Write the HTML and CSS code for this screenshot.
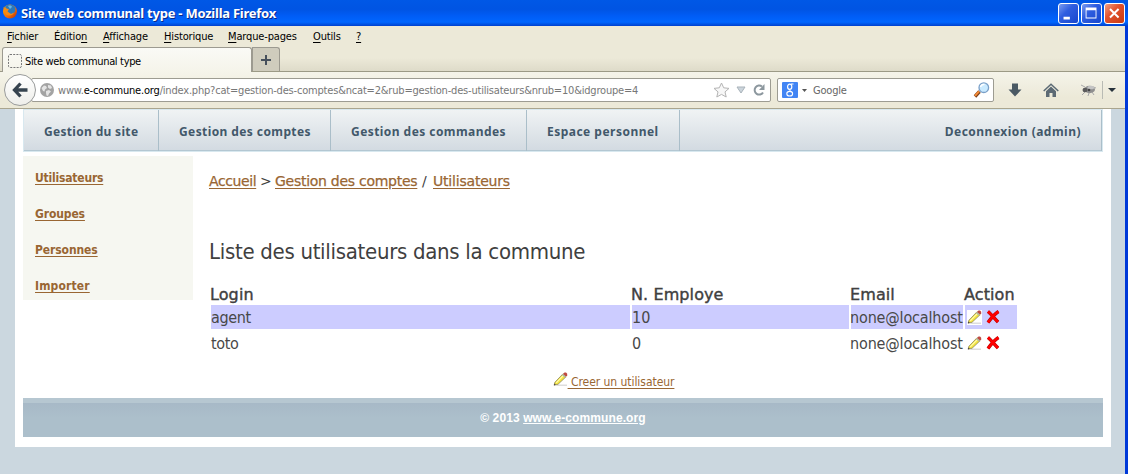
FILE: index.html
```html
<!DOCTYPE html>
<html lang="fr">
<head>
<meta charset="utf-8">
<title>Site web communal type</title>
<link rel="stylesheet" href="styles.css">
</head>
<body>
<svg class="defs" width="0" height="0">
  <defs>
    <linearGradient id="fox" x1="0" y1="0" x2="1" y2="1"><stop offset="0" stop-color="#ffb400"/><stop offset=".6" stop-color="#f06a0a"/><stop offset="1" stop-color="#b02c08"/></linearGradient>
    <symbol id="pencil" viewBox="0 0 15 15">
      <path d="M4 12.500h10v1.500H3z" fill="#ddd"/>
      <path d="M1.200 13L2 10.200 10 1.800 13.200 4.600 5 12.300z" fill="#f4e53c" stroke="#8b8558" stroke-width=".8"/>
      <path d="M3.200 10.800L11 2.800" stroke="#fffbb0" stroke-width="1.200"/>
      <path d="M10 2l1.500-1.600h1.500l1.200 1.300v1.600L13 4.600z" fill="#c04a42"/>
      <path d="M9.300 2.500l3 2.600" stroke="#aeb6b0" stroke-width="1.300"/>
      <path d="M.8 13.600l.6-2 1.500 1.500z" fill="#4c4538"/>
    </symbol>
    <symbol id="cross" viewBox="0 0 14 14">
      <path d="M2 1.500C5 4 9 9 12 12M12.500 1.500C8.500 4 4.500 9 2 12.500" stroke="#b30000" stroke-width="3.400" fill="none"/>
      <path d="M2 1.500C5 4 9 9 12 12M12.500 1.500C8.500 4 4.500 9 2 12.500" stroke="#f00" stroke-width="2.400" fill="none"/>
    </symbol>
  </defs>
</svg>
<div class="window">
  <header class="titlebar">
    <svg class="fox" width="16" height="16" viewBox="0 0 16 16"><circle cx="8" cy="7.500" r="7" fill="url(#fox)"/><path d="M3 3C5 0 11 0 13 3c1 3 0 6-3 7-3 0-5-1-6-3l2-1z" fill="#2b79bd"/><path d="M6 2c2-1 4 0 4 1L8 5z" fill="#65b6e6"/><path d="M1.200 3l2 1.500L7 5 5.500 7.500 9 10l3-1.500c-1 3-5 4-8 2z" fill="#f58a16"/></svg>
    <span class="caption">Site web communal type - Mozilla Firefox</span>
    <div class="controls">
      <svg class="ctl" viewBox="0 0 21 21"><path d="M5 14h7v3H5z" fill="#fff"/></svg>
      <svg class="ctl" viewBox="0 0 21 21"><path d="M4 4h12v12H4zM5 7v8h10V7z" fill="#fff" fill-rule="evenodd"/></svg>
      <svg class="ctl close" viewBox="0 0 21 21"><path d="M5.500 5.500l9.500 9.500M15 5.500L5.500 15" stroke="#fff" stroke-width="2.200"/></svg>
    </div>
  </header>
  <div class="frame">
    <nav class="menubar">
      <span class="m1"><u>F</u>ichier</span><span class="m2">Éditio<u>n</u></span><span class="m3"><u>A</u>ffichage</span><span class="m4"><u>H</u>istorique</span><span class="m5"><u>M</u>arque-pages</span><span class="m6"><u>O</u>utils</span><span class="m7"><u>?</u></span>
    </nav>
    <div class="tabs">
      <div class="tab"><svg width="14" height="14" viewBox="0 0 14 14"><rect x=".5" y=".5" width="13" height="13" rx="1.500" fill="none" stroke="#777" stroke-dasharray="2 1.200"/></svg><span>Site web communal type</span></div>
      <div class="newtab"><svg width="10" height="10" viewBox="0 0 10 10"><path d="M4 0h2v4h4v2H6v4H4V6H0V4h4z" fill="#46505c"/></svg></div>
    </div>
    <div class="toolbar">
      <div class="back"><svg width="16" height="16" viewBox="0 0 16 16"><path d="M8.500 1.500L2.500 8l6 6.500M3 8h12.500" fill="none" stroke="#36434f" stroke-width="3.300"/></svg></div>
      <div class="urlbar">
        <svg width="14" height="14" viewBox="0 0 14 14"><circle cx="7" cy="7" r="7" fill="#a3a3a3"/><path d="M1.500 5L4 2.500l2 .5 1 2-2 1.500-.5 2L3 8zM8 2l3 .5L12 5l-2 1-2-1.500zM6 8l3-1 2 1.500-2 2-1 2.500-1.500-.5L6 10z" fill="#e4e4e4"/></svg>
        <span class="url">www.<b>e-commune.org</b>/index.php?cat=gestion-des-comptes&amp;ncat=2&amp;rub=gestion-des-utilisateurs&amp;nrub=10&amp;idgroupe=4</span>
        <svg class="star" width="17" height="16" viewBox="0 0 17 16"><path d="M8.500 1l2.200 4.800 5.300.6-4 3.500 1.200 5.100-4.700-2.600L3.800 15 5 9.900 1 6.400l5.300-.6z" fill="#f7f7f7" stroke="#b4b4b4"/></svg>
        <svg class="drop" width="10" height="8" viewBox="0 0 10 8"><path d="M1 1h8L5 7z" fill="#ccd5dc" stroke="#a9b3ba"/></svg>
        <svg class="reload" width="12" height="12" viewBox="0 0 12 12"><path d="M9 2.600A4.500 4.500 0 1 0 10 8.400" fill="none" stroke="#8c979e" stroke-width="2"/><path d="M11.500 0v6H6z" fill="#8c979e"/></svg>
      </div>
      <div class="search">
        <svg width="16" height="16" viewBox="0 0 16 16"><rect width="16" height="16" rx="1" fill="#4285f4"/><ellipse cx="7.700" cy="4.700" rx="2.100" ry="2.600" fill="none" stroke="#fff" stroke-width="1.200"/><ellipse cx="7.700" cy="11.700" rx="2.900" ry="2.300" fill="none" stroke="#fff" stroke-width="1.100"/><path d="M9 2h2.500M7 7.500l2 2" stroke="#fff"/></svg>
        <svg class="caret" width="5" height="3" viewBox="0 0 5 3"><path d="M0 0h5L2.500 3z" fill="#555"/></svg>
        <span>Google</span>
        <svg class="lens" width="17" height="16" viewBox="0 0 17 16"><path d="M2 14.500l4.500-5" stroke="#7b3f18" stroke-width="3.400"/><path d="M2 13.800l4-4.400" stroke="#f58b36" stroke-width="2"/><circle cx="10.800" cy="5.700" r="4.800" fill="#c9eaff" stroke="#7ba0c8" stroke-width="1.300"/><path d="M7.500 5a3.500 3.500 0 0 1 4-2.500" stroke="#fff" stroke-width="1.500" fill="none"/></svg>
      </div>
      <svg class="t-down" width="14" height="14" viewBox="0 0 14 14"><path d="M4 .5h6v6h3.500L7 13.500.5 6.500H4z" fill="#4a5963"/></svg>
      <svg class="t-home" width="16" height="15" viewBox="0 0 16 15"><path d="M.7 8L8 1.200 15.300 8" fill="none" stroke="#5c6a74" stroke-width="1.500"/><path d="M3 8.200L8 3.600l5 4.600V14H9.500v-4h-3v4H3z" fill="#5c6a74"/></svg>
      <svg class="t-bug" width="17" height="13" viewBox="0 0 17 13"><path d="M5 3L1 1M5 8l-3 3M9 9l-1 3M12 8l2 3M13 3l3 1" stroke="#aaa" stroke-width="1"/><ellipse cx="9.500" cy="5.500" rx="5.500" ry="3.700" fill="#8f8f8f"/><ellipse cx="5" cy="6" rx="2.500" ry="2.300" fill="#5b5b5b"/><ellipse cx="11" cy="3.500" rx="3.500" ry="1.800" fill="#c4c4c4"/><circle cx="9" cy="6" r="1.300" fill="#444"/></svg>
      <i class="rule"></i>
      <svg class="t-more" width="8" height="4" viewBox="0 0 8 4"><path d="M0 0h8L4 4z" fill="#27323b"/></svg>
    </div>
    <main class="viewport">
      <div class="page">
        <nav class="nav">
          <a class="n1">Gestion du site</a><a class="n2">Gestion des comptes</a><a class="n3">Gestion des commandes</a><a class="n4">Espace personnel</a><a class="n5">Deconnexion (admin)</a>
        </nav>
        <div class="columns">
          <aside class="side"><a class="s1">Utilisateurs</a><a class="s2">Groupes</a><a class="s3">Personnes</a><a class="s4">Importer</a></aside>
          <section class="content">
            <p class="crumbs"><a class="c1">Accueil</a><span class="c2">&gt;</span><a class="c3">Gestion des comptes</a><span class="c4">/</span><a class="c5">Utilisateurs</a></p>
            <h1>Liste des utilisateurs dans la commune</h1>
            <div class="grid head"><span>Login</span><span>N. Employe</span><span>Email</span><span>Action</span></div>
            <div class="grid row odd"><span class="login">agent</span><span>10</span><span class="mail">none@localhost</span><span class="act"><svg class="pen"><use href="#pencil"/></svg><svg class="del"><use href="#cross"/></svg></span></div>
            <div class="grid row"><span class="login">toto</span><span>0</span><span class="mail">none@localhost</span><span class="act"><svg class="pen"><use href="#pencil"/></svg><svg class="del"><use href="#cross"/></svg></span></div>
            <div class="create"><svg class="pen"><use href="#pencil"/></svg><a>&nbsp;Creer un utilisateur</a></div>
          </section>
        </div>
        <footer class="foot">© 2013 <u>www.e-commune.org</u></footer>
      </div>
    </main>
  </div>
</div>
</body>
</html>
```

FILE: styles.css
```css
* { box-sizing: border-box; }
body { margin: 0; overflow: hidden; font-family: "DejaVu Sans Condensed", "DejaVu Sans", sans-serif; font-stretch: condensed; color: #404040; }
svg { display: block; flex: none; }
span, a { white-space: nowrap; }
.defs { position: absolute; }
.window { width: 1128px; height: 474px; display: flex; flex-direction: column; }
.titlebar { height: 26px; display: flex; align-items: center; padding: 0 3px 0 2px; background: linear-gradient(#0058e6 0, #0054e3 35%, #005cf5 60%, #0066ff 85%, #0050e0 94%, #0040cf); }
.fox { margin-top: -2px; }
.caption { margin-left: 3px; font: bold 13px "Noto Sans", sans-serif; color: #fff; text-shadow: 1px 1px 0 #0a2a8a; letter-spacing: -.24px; }
.controls { margin-left: auto; display: flex; gap: 2px; }
.ctl { width: 21px; height: 21px; border: 1px solid #fff; border-radius: 3px; background: linear-gradient(135deg, #7b9cf0, #2f5ee0 40%, #1746cd); }
.close { background: linear-gradient(135deg, #f0a083, #e1532f 40%, #c93a10); }
.frame { flex: 1; display: flex; flex-direction: column; border-right: 3px solid #0039d8; background: #ece9d8; }
.menubar { height: 21px; display: flex; font-size: 11px; line-height: 21px; color: #000; padding-left: 7px; }
.menubar span { letter-spacing: -.15px; }
.menubar u { text-underline-offset: 2px; }
.m1 { width: 47px; } .m2 { width: 49px; } .m3 { width: 61px; } .m4 { width: 64px; } .m5 { width: 85px; } .m6 { width: 43px; }
.tabs { height: 25px; display: flex; border-bottom: 1px solid #9c9a86; background: linear-gradient(#ece9d8 45%, #dedbc9); padding-left: 2px; }
.tab { width: 250px; height: 25px; display: flex; align-items: center; gap: 3px; padding: 2px 0 0 5px; font-size: 11px; color: #000; letter-spacing: -.33px; border: 1px solid #9c9a90; border-bottom: 0; border-radius: 3px 3px 0 0; background: linear-gradient(#fafaf6, #f5f4ea); }
.newtab { width: 28px; height: 24px; display: grid; place-items: center; border: 1px solid #9c9a90; border-bottom: 0; border-radius: 0 3px 0 0; background: #cfccbd; }
.toolbar { height: 37px; display: flex; align-items: center; border-bottom: 1px solid #aaa58e; background: linear-gradient(#f5f4ea, #ece9d8 70%); padding-left: 4px; }
.back { width: 32px; height: 32px; display: grid; place-items: center; border: 1px solid #999b9b; border-radius: 50%; background: linear-gradient(#fff, #eeeeea); z-index: 1; flex: none; }
.urlbar, .search { height: 24px; display: flex; align-items: center; border: 1px solid #9d9c92; border-radius: 2px; background: #fff; font-size: 11px; flex: none; }
.urlbar { width: 740px; margin-left: -5px; padding: 0 5px 0 8px; }
.url { width: 655px; margin-left: 4px; padding-top: 1px; color: #777; letter-spacing: -.19px; }
.star { margin-left: 1px; }
.url b { font-weight: normal; color: #000; }
.drop { margin-left: 6px; }
.reload { margin-left: 7px; }
.search { width: 217px; margin-left: 6px; padding: 0 3px 0 4px; color: #666; }
.caret { margin: 0 6px 0 4px; }
.search span { letter-spacing: -.2px; padding-top: 1px; }
.lens { margin-left: auto; }
.t-down { margin-left: 14px; } .t-home { margin-left: 21px; } .t-bug { margin-left: 21px; }
.rule { width: 1px; height: 18px; background: #b9bbb4; margin: 0 5px 0 5px; }
.viewport { flex: 1; background: #cbd7df; padding-left: 15px; }
.page { width: 1096px; height: 338px; background: #fff; padding: 0 8px; }
.nav { width: 1080px; height: 43px; display: flex; border: 1px solid #d8e8ef; background: linear-gradient(#f0f3f4, #d2dae1); box-shadow: inset 0 -1px #b3c7d2; font: bold 12px/43px "Noto Sans", sans-serif; color: #42586a; }
.nav a { border-right: 1px solid #aabec9; height: 41px; padding-left: 20px; letter-spacing: .4px; }
.nav .n1 { letter-spacing: .32px; } .nav .n3 { letter-spacing: .44px; } .nav .n4, .nav .n5 { letter-spacing: .48px; }
.n1 { width: 135px; } .n2 { width: 172px; } .n3 { width: 196px; } .n4 { width: 153px; } .n5 { flex: 1; text-align: right; padding-right: 20px; }
.columns { display: flex; height: 246px; padding-top: 4px; }
.side { width: 170px; height: 144px; padding: 4px 0 0 12px; background: #f6f7f1; font-size: 12px; font-weight: bold; line-height: 36px; color: #963; overflow: hidden; }
.side a { display: block; text-decoration: underline; text-underline-offset: 2px; letter-spacing: -.2px; }
.side .s2 { letter-spacing: -.12px; } .side .s3 { letter-spacing: -.1px; } .side .s4 { letter-spacing: .15px; }
.content { width: 825px; margin-left: 16px; }
.crumbs { margin: 15px 0 0; display: flex; font-family: "DejaVu Sans", sans-serif; font-stretch: normal; font-size: 14px; line-height: 20px; letter-spacing: -.27px; }
.crumbs a { color: #963; text-underline-offset: 2px; text-decoration: underline; -webkit-text-stroke: .25px #963; }
.c1 { width: 51px; letter-spacing: -.4px; } .c2 { width: 15px; } .c3 { width: 147px; } .c4 { width: 11px; }
.crumbs .c5 { letter-spacing: -.2px; }
h1 { margin: 46px 0 0; font-size: 22px; font-weight: normal; line-height: 30px; letter-spacing: -.3px; white-space: nowrap; }
.grid { display: grid; grid-template-columns: 419px 217px 112px 52px; grid-template-rows: 100%; column-gap: 2px; margin-left: 2px; }
.head { margin-top: 17px; height: 21px; font-family: "DejaVu Sans", sans-serif; font-stretch: normal; font-size: 16px; line-height: 21px; letter-spacing: .1px; -webkit-text-stroke: .4px #404040; }
.head span { margin-left: -1px; }
.row { font-size: 16px; line-height: 26px; height: 24px; margin-bottom: 2px; color: #484848; }
.odd > span { background: #ccf; }
.row .login { letter-spacing: -.35px; }
.row .mail { letter-spacing: -.15px; text-indent: -1px; }
.act { display: flex; align-items: center; gap: 4px; padding-left: 2px; }
.pen { width: 15px; height: 15px; background: #fff; }
.del { width: 14px; height: 14px; }
.create { display: flex; justify-content: center; margin: 17px 0 0 -15px; font-size: 12px; line-height: 20px; color: #963; }
.create a { text-decoration: underline; text-underline-offset: 2px; letter-spacing: -.05px; }
.create .pen { margin-left: -1px; }
.foot { height: 39px; border-top: 5px solid #b6c7d1; background: linear-gradient(#a7b9c7, #acbfcb 45%); font: bold 12px/30px "Liberation Sans", sans-serif; letter-spacing: .1px; color: #fff; text-align: center; }
```
